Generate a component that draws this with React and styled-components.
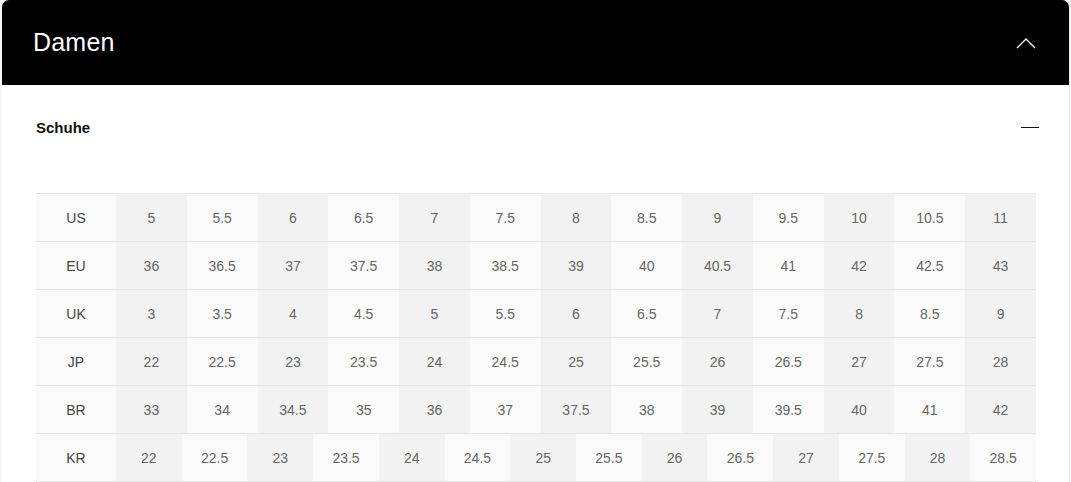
import React from "react";
import styled, { createGlobalStyle } from "styled-components";

const Global = createGlobalStyle`
  html, body {
    margin: 0;
    padding: 0;
    background: #fff;
    font-family: "Liberation Sans", Arial, sans-serif;
  }
`;

const Page = styled.div`
  display: flex;
  height: 482px;
  overflow: hidden;
  border-left: 2px solid #fcf4f4;
`;

const Card = styled.div`
  width: 1067px;
  border-right: 1px solid #e8e8e8;
  background: #fff;
`;

const Header = styled.div`
  display: flex;
  align-items: center;
  justify-content: space-between;
  height: 85px;
  padding: 0 33px 0 31px;
  background: #000;
  color: #fff;
  border-radius: 7px 7px 0 0;
  box-sizing: border-box;
`;

const Title = styled.h2`
  margin: 0;
  font-size: 25px;
  font-weight: 400;
  letter-spacing: 0.2px;
`;

const Section = styled.div`
  padding: 0 30px 0 34px;
`;

const SectionHead = styled.div`
  display: flex;
  align-items: center;
  justify-content: space-between;
  height: 84px;
  margin-bottom: 24px;
`;

const SectionTitle = styled.span`
  font-size: 15px;
  font-weight: 700;
  color: #111;
`;

const Minus = styled.span`
  display: block;
  width: 18px;
  height: 1px;
  background: #111;
`;

const Table = styled.div`
  width: 1000px;
  border-top: 1px solid #e5e5e5;
`;

const Row = styled.div`
  display: flex;
  height: 47px;
  border-bottom: 1px solid #e5e5e5;
`;

const Label = styled.div`
  flex: 0 0 80px;
  display: flex;
  align-items: center;
  justify-content: center;
  background: #fafafa;
  color: #444;
  font-size: 14px;
`;

const Cell = styled.div`
  flex: 1 1 0;
  display: flex;
  align-items: center;
  justify-content: center;
  background: ${(p) => (p.$dark ? "#f2f2f2" : "#fafafa")};
  color: #666;
  font-size: 14px;
`;

const rows = [
  ["US", ["5", "5.5", "6", "6.5", "7", "7.5", "8", "8.5", "9", "9.5", "10", "10.5", "11"]],
  ["EU", ["36", "36.5", "37", "37.5", "38", "38.5", "39", "40", "40.5", "41", "42", "42.5", "43"]],
  ["UK", ["3", "3.5", "4", "4.5", "5", "5.5", "6", "6.5", "7", "7.5", "8", "8.5", "9"]],
  ["JP", ["22", "22.5", "23", "23.5", "24", "24.5", "25", "25.5", "26", "26.5", "27", "27.5", "28"]],
  ["BR", ["33", "34", "34.5", "35", "36", "37", "37.5", "38", "39", "39.5", "40", "41", "42"]],
  ["KR", ["22", "22.5", "23", "23.5", "24", "24.5", "25", "25.5", "26", "26.5", "27", "27.5", "28", "28.5"]],
];

const ChevronUp = () => (
  <svg width="20" height="12" viewBox="0 0 20 12" fill="none">
    <path d="M1 11L10 2L19 11" stroke="#fff" strokeWidth="1.4" />
  </svg>
);

export default function App() {
  return (
    <Page>
      <Global />
      <Card>
        <Header>
          <Title>Damen</Title>
          <ChevronUp />
        </Header>
        <Section>
          <SectionHead>
            <SectionTitle>Schuhe</SectionTitle>
            <Minus />
          </SectionHead>
          <Table>
            {rows.map(([label, values]) => (
              <Row key={label}>
                <Label>{label}</Label>
                {values.map((v, i) => (
                  <Cell key={i} $dark={i % 2 === 0}>
                    {v}
                  </Cell>
                ))}
              </Row>
            ))}
          </Table>
        </Section>
      </Card>
    </Page>
  );
}
